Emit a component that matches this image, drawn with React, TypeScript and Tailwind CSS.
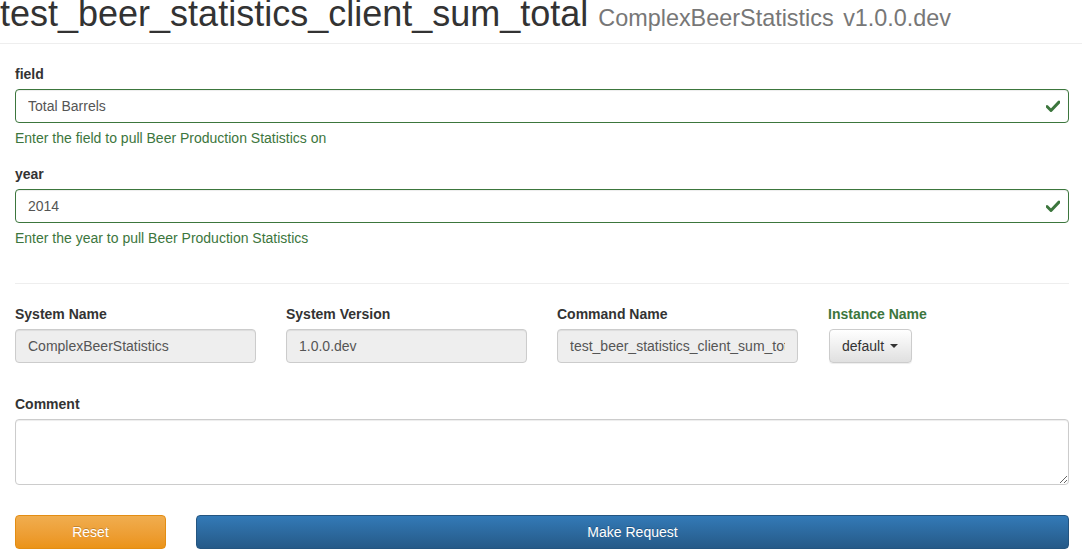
import React from "react";

function Check() {
  return (
    <svg width="14" height="12" viewBox="0 0 14 12" className="absolute right-[9px] top-[11px]">
      <path d="M1 6.5 L5 10.5 L13 2" fill="none" stroke="#3c763d" strokeWidth="3" strokeLinecap="round" strokeLinejoin="round" />
    </svg>
  );
}

function ValidField({ label, value, help }: { label: string; value: string; help: string }) {
  return (
    <div className="mb-[16px]">
      <label className="block font-bold mb-[5px]">{label}</label>
      <div className="relative">
        <input
          readOnly
          value={value}
          className="block w-full h-[34px] px-[12px] border border-[#3c763d] rounded-[4px] text-[#555] outline-none shadow-[inset_0_1px_1px_rgba(0,0,0,0.075)]"
        />
        <Check />
      </div>
      <p className="mt-[5px] text-[#3c763d]">{help}</p>
    </div>
  );
}

function ReadOnly({ label, value }: { label: string; value: string }) {
  return (
    <div>
      <label className="block font-bold mb-[5px]">{label}</label>
      <input
        disabled
        value={value}
        className="block w-full h-[34px] px-[12px] border border-[#ccc] rounded-[4px] bg-[#eee] text-[#555] shadow-[inset_0_1px_1px_rgba(0,0,0,0.075)]"
      />
    </div>
  );
}

export default function App() {
  return (
    <div className="font-['Liberation_Sans',Arial,sans-serif] text-[14px] leading-[20px] text-[#333] bg-white h-[560px] overflow-hidden">
      <div className="-mt-[6px] pb-[9px] border-b border-[#eee]">
        <h1 className="text-[36px] leading-[40px] h-[40px] whitespace-nowrap">
          test_beer_statistics_client_sum_total{" "}
          <small className="text-[23.4px] leading-[0] text-[#777]">
            ComplexBeerStatistics <span className="ml-[3px]">v1.0.0.dev</span>
          </small>
        </h1>
      </div>

      <div className="pl-[15px] pr-[13px] pt-[20px]">
        <ValidField label="field" value="Total Barrels" help="Enter the field to pull Beer Production Statistics on" />
        <ValidField label="year" value="2014" help="Enter the year to pull Beer Production Statistics" />

        <hr className="mt-[35px] mb-[20px] border-t border-[#eee]" />

        <div className="grid grid-cols-4 gap-x-[30px]">
          <ReadOnly label="System Name" value="ComplexBeerStatistics" />
          <ReadOnly label="System Version" value="1.0.0.dev" />
          <ReadOnly label="Command Name" value="test_beer_statistics_client_sum_total" />
          <div>
            <label className="block font-bold mb-[5px] text-[#3c763d]">Instance Name</label>
            <button className="ml-[1px] h-[34px] pl-[12px] pr-[13px] flex items-center gap-[6px] border border-[#ccc] rounded-[4px] bg-gradient-to-b from-white to-[#e0e0e0] text-[#333] shadow-[inset_0_1px_0_rgba(255,255,255,0.15),0_1px_1px_rgba(0,0,0,0.075)]">
              default
              <span className="w-0 h-0 border-x-[4px] border-x-transparent border-t-[4px] border-t-[#333]" />
            </button>
          </div>
        </div>

        <div className="mt-[31px]">
          <label className="block font-bold mb-[5px]">Comment</label>
          <textarea className="block w-full h-[66px] px-[12px] py-[6px] border border-[#ccc] rounded-[4px] outline-none resize-y shadow-[inset_0_1px_1px_rgba(0,0,0,0.075)]" />
        </div>

        <div className="mt-[30px] grid grid-cols-[151px_1fr] gap-x-[30px]">
          <button className="h-[34px] rounded-[4px] border border-[#e38d13] bg-gradient-to-b from-[#f0ad4e] to-[#eb9316] text-white [text-shadow:0_-1px_0_rgba(0,0,0,0.2)]">
            Reset
          </button>
          <button className="h-[34px] rounded-[4px] border border-[#245580] bg-gradient-to-b from-[#337ab7] to-[#265a88] text-white [text-shadow:0_-1px_0_rgba(0,0,0,0.2)]">
            Make Request
          </button>
        </div>
      </div>
    </div>
  );
}
